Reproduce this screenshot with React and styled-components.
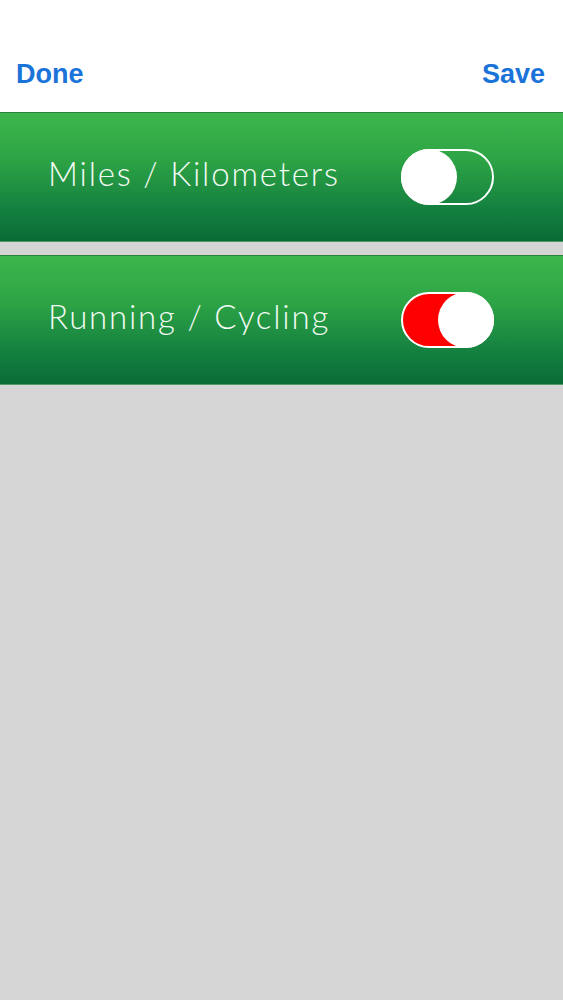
import React, { useState } from 'react';
import styled, { createGlobalStyle } from 'styled-components';

const GlobalStyle = createGlobalStyle`
  html, body {
    margin: 0;
    padding: 0;
    background: #d6d5d6;
  }
  #root {
    min-height: 100vh;
  }
`;

const Screen = styled.div`
  min-height: 1000px;
  background: #d6d5d6;
  display: flex;
  flex-direction: column;
`;

const Header = styled.div`
  height: 112px;
  background: #ffffff;
  display: flex;
  align-items: center;
  justify-content: space-between;
  padding: 0 18px 0 16px;
  box-sizing: border-box;
`;

const NavButton = styled.button`
  background: none;
  border: none;
  padding: 0;
  margin-top: 37px;
  font-family: "Liberation Sans", Arial, sans-serif;
  font-weight: 700;
  font-size: 27px;
  color: #1a73d8;
  cursor: pointer;
`;

const List = styled.div`
  display: flex;
  flex-direction: column;
  gap: 13px;
`;

const Row = styled.div`
  height: 130px;
  box-sizing: border-box;
  display: flex;
  align-items: center;
  justify-content: space-between;
  padding: 0 69px 0 48px;
  background: linear-gradient(180deg, #3db64c 0%, #2ea545 35%, #148040 75%, #0a6b35 100%);
  border-top: 1px solid #2b8040;
  border-bottom: 1px solid #4f9a66;
`;

const Label = styled.span`
  font-family: Lato, "Open Sans", sans-serif;
  font-weight: 300;
  font-size: 33px;
  letter-spacing: 1.8px;
  color: #f4fbf5;
  margin-top: -8px;
`;

const Track = styled.button`
  position: relative;
  width: 93px;
  height: 56px;
  box-sizing: border-box;
  border-radius: 28px;
  border: 2px solid #ffffff;
  padding: 0;
  background: ${p => (p.on ? '#ff0000' : 'transparent')};
  cursor: pointer;
`;

const Knob = styled.span`
  position: absolute;
  top: -2px;
  left: ${p => (p.on ? '35px' : '-2px')};
  width: 56px;
  height: 56px;
  border-radius: 50%;
  background: #ffffff;
`;

const Toggle = ({ on, onChange }) => (
  <Track on={on ? 1 : 0} onClick={() => onChange(!on)} aria-pressed={on}>
    <Knob on={on ? 1 : 0} />
  </Track>
);

const App = () => {
  const [kilometers, setKilometers] = useState(false);
  const [cycling, setCycling] = useState(true);

  return (
    <>
      <GlobalStyle />
      <Screen>
        <Header>
          <NavButton>Done</NavButton>
          <NavButton>Save</NavButton>
        </Header>
        <List>
          <Row>
            <Label>Miles / Kilometers</Label>
            <Toggle on={kilometers} onChange={setKilometers} />
          </Row>
          <Row>
            <Label>Running / Cycling</Label>
            <Toggle on={cycling} onChange={setCycling} />
          </Row>
        </List>
      </Screen>
    </>
  );
};

export default App;
